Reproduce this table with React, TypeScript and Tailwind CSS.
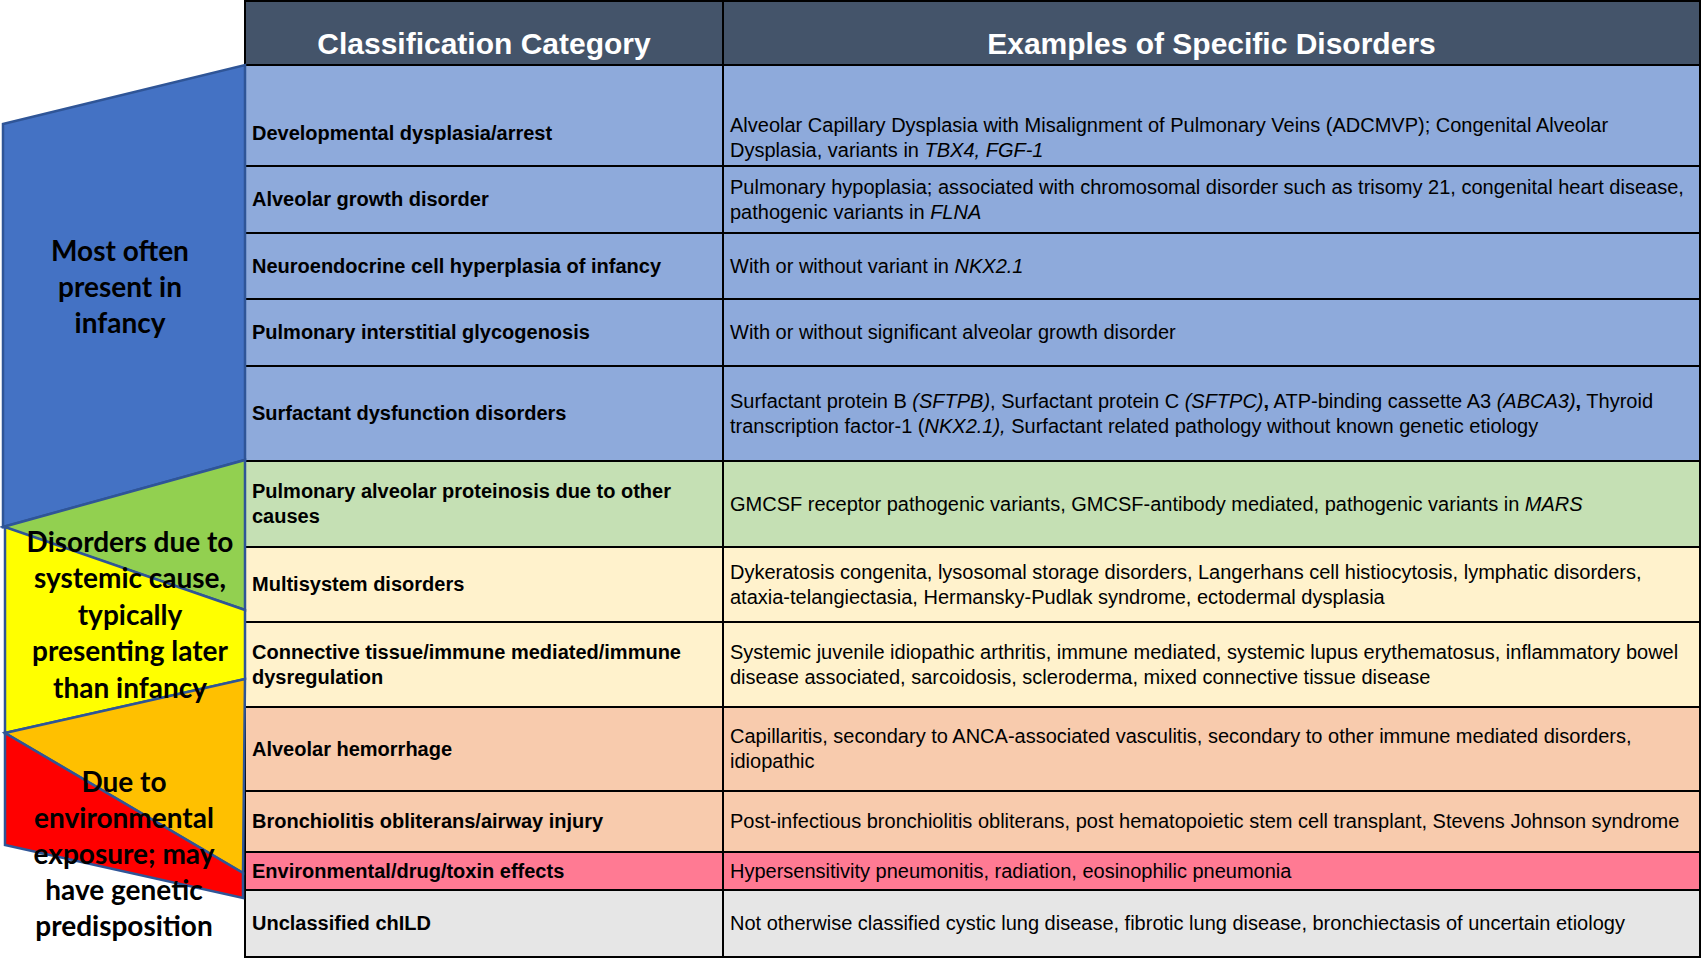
import React from "react";

interface Row {
  h: string;
  bg: string;
  name: React.ReactNode;
  ex: React.ReactNode;
  bottom?: boolean;
}

const rows: Row[] = [
  {
    h: "h-[101px]",
    bg: "bg-[#8eaadb]",
    bottom: true,
    name: "Developmental dysplasia/arrest",
    ex: (
      <>
        Alveolar Capillary Dysplasia with Misalignment of Pulmonary Veins (ADCMVP); Congenital Alveolar
        <br />
        Dysplasia, variants in <i>TBX4, FGF-1</i>
      </>
    ),
  },
  {
    h: "h-[67px]",
    bg: "bg-[#8eaadb]",
    name: "Alveolar growth disorder",
    ex: (
      <>
        Pulmonary hypoplasia; associated with chromosomal disorder such as trisomy 21, congenital heart disease,
        <br />
        pathogenic variants in <i>FLNA</i>
      </>
    ),
  },
  {
    h: "h-[66px]",
    bg: "bg-[#8eaadb]",
    name: "Neuroendocrine cell hyperplasia of infancy",
    ex: (
      <>
        With or without variant in <i>NKX2.1</i>
      </>
    ),
  },
  {
    h: "h-[67px]",
    bg: "bg-[#8eaadb]",
    name: "Pulmonary interstitial glycogenosis",
    ex: "With or without significant alveolar growth disorder",
  },
  {
    h: "h-[95px]",
    bg: "bg-[#8eaadb]",
    name: "Surfactant dysfunction disorders",
    ex: (
      <>
        Surfactant protein B <i>(SFTPB)</i>, Surfactant protein C <i>(SFTPC)</i>
        <b>,</b> ATP-binding cassette A3 <i>(ABCA3)</i>
        <b>,</b> Thyroid
        <br />
        transcription factor-1 (<i>NKX2.1),</i> Surfactant related pathology without known genetic etiology
      </>
    ),
  },
  {
    h: "h-[86px]",
    bg: "bg-[#c5e0b4]",
    name: (
      <>
        Pulmonary alveolar proteinosis due to other
        <br />
        causes
      </>
    ),
    ex: (
      <>
        GMCSF receptor pathogenic variants, GMCSF-antibody mediated, pathogenic variants in <i>MARS</i>
      </>
    ),
  },
  {
    h: "h-[75px]",
    bg: "bg-[#fff2cc]",
    name: "Multisystem disorders",
    ex: (
      <>
        Dykeratosis congenita, lysosomal storage disorders, Langerhans cell histiocytosis, lymphatic disorders,
        <br />
        ataxia-telangiectasia, Hermansky-Pudlak syndrome, ectodermal dysplasia
      </>
    ),
  },
  {
    h: "h-[85px]",
    bg: "bg-[#fff2cc]",
    name: (
      <>
        Connective tissue/immune mediated/immune
        <br />
        dysregulation
      </>
    ),
    ex: (
      <>
        Systemic juvenile idiopathic arthritis, immune mediated, systemic lupus erythematosus, inflammatory bowel
        <br />
        disease associated, sarcoidosis, scleroderma, mixed connective tissue disease
      </>
    ),
  },
  {
    h: "h-[84px]",
    bg: "bg-[#f8cbad]",
    name: "Alveolar hemorrhage",
    ex: (
      <>
        Capillaritis, secondary to ANCA-associated vasculitis, secondary to other immune mediated disorders,
        <br />
        idiopathic
      </>
    ),
  },
  {
    h: "h-[61px]",
    bg: "bg-[#f8cbad]",
    name: "Bronchiolitis obliterans/airway injury",
    ex: "Post-infectious bronchiolitis obliterans, post hematopoietic stem cell transplant, Stevens Johnson syndrome",
  },
  {
    h: "h-[38px]",
    bg: "bg-[#ff7a93]",
    name: "Environmental/drug/toxin effects",
    ex: "Hypersensitivity pneumonitis, radiation, eosinophilic pneumonia",
  },
  {
    h: "h-[67px]",
    bg: "bg-[#e6e6e6]",
    name: "Unclassified chILD",
    ex: "Not otherwise classified cystic lung disease, fibrotic lung disease, bronchiectasis of uncertain etiology",
  },
];

// wedge diagram on the left, drawn in page pixels
function Wedges() {
  const stroke = "#2f5597";
  return (
    <div className="relative z-10 w-[244px] shrink-0 font-['Lato','Open_Sans',sans-serif] text-[28px] font-bold text-black">
      <svg className="absolute left-0 top-0 overflow-visible" width="248" height="958" viewBox="0 0 248 958">
        <polygon points="3,124 245,65 245,460 3,527" fill="#4472c4" stroke={stroke} strokeWidth="2.5" />
        <polygon points="3,527 245,460 245,610" fill="#92d050" stroke={stroke} strokeWidth="2.5" />
        <polygon points="5,527 245,610 245,679 5,733" fill="#ffff00" stroke={stroke} strokeWidth="2.5" />
        <polygon points="5,733 245,679 243,873" fill="#ffc000" stroke={stroke} strokeWidth="2.5" />
        <polygon points="5,733 243,873 243,898 5,845" fill="#ff0000" stroke={stroke} strokeWidth="2.5" />
      </svg>
      <div className="absolute left-0 top-[232px] w-[240px] text-center leading-[36px]">
        Most often
        <br />
        present in
        <br />
        infancy
      </div>
      <div className="absolute left-[10px] top-[523px] w-[240px] text-center leading-[36.4px]">
        Disorders due to
        <br />
        systemic cause,
        <br />
        typically
        <br />
        presenting later
        <br />
        than infancy
      </div>
      <div className="absolute left-[4px] top-[763px] w-[240px] text-center leading-[36px]">
        Due to
        <br />
        environmental
        <br />
        exposure; may
        <br />
        have genetic
        <br />
        predisposition
      </div>
    </div>
  );
}

export default function App() {
  return (
    <div className="flex h-[958px] w-[1701px] overflow-hidden bg-white font-['Liberation_Sans',Arial,sans-serif]">
      <Wedges />

      {/* table */}
      <div className="w-[1457px] shrink-0 border-x-2 border-t-2 border-black">
        <div className="grid h-[64px] grid-cols-[478px_1fr] border-b-2 border-black bg-[#44546a] text-[30px] font-bold leading-[36px] text-white">
          <div className="border-r-2 border-black pt-[24px] text-center">Classification Category</div>
          <div className="pt-[24px] text-center">Examples of Specific Disorders</div>
        </div>

        {rows.map((r, i) => (
          <div
            key={i}
            className={`grid grid-cols-[478px_1fr] border-b-2 border-black text-[20px] leading-[25px] text-black ${r.h} ${r.bg}`}
          >
            <div
              className={`flex border-r-2 border-black pl-[6px] pr-2 font-bold ${
                r.bottom ? "items-end pb-[19px]" : "items-center"
              }`}
            >
              <div>{r.name}</div>
            </div>
            <div className={`flex pl-[6px] pr-2 ${r.bottom ? "items-end pb-[2px]" : "items-center"}`}>
              <div className="whitespace-nowrap">{r.ex}</div>
            </div>
          </div>
        ))}
      </div>
    </div>
  );
}
